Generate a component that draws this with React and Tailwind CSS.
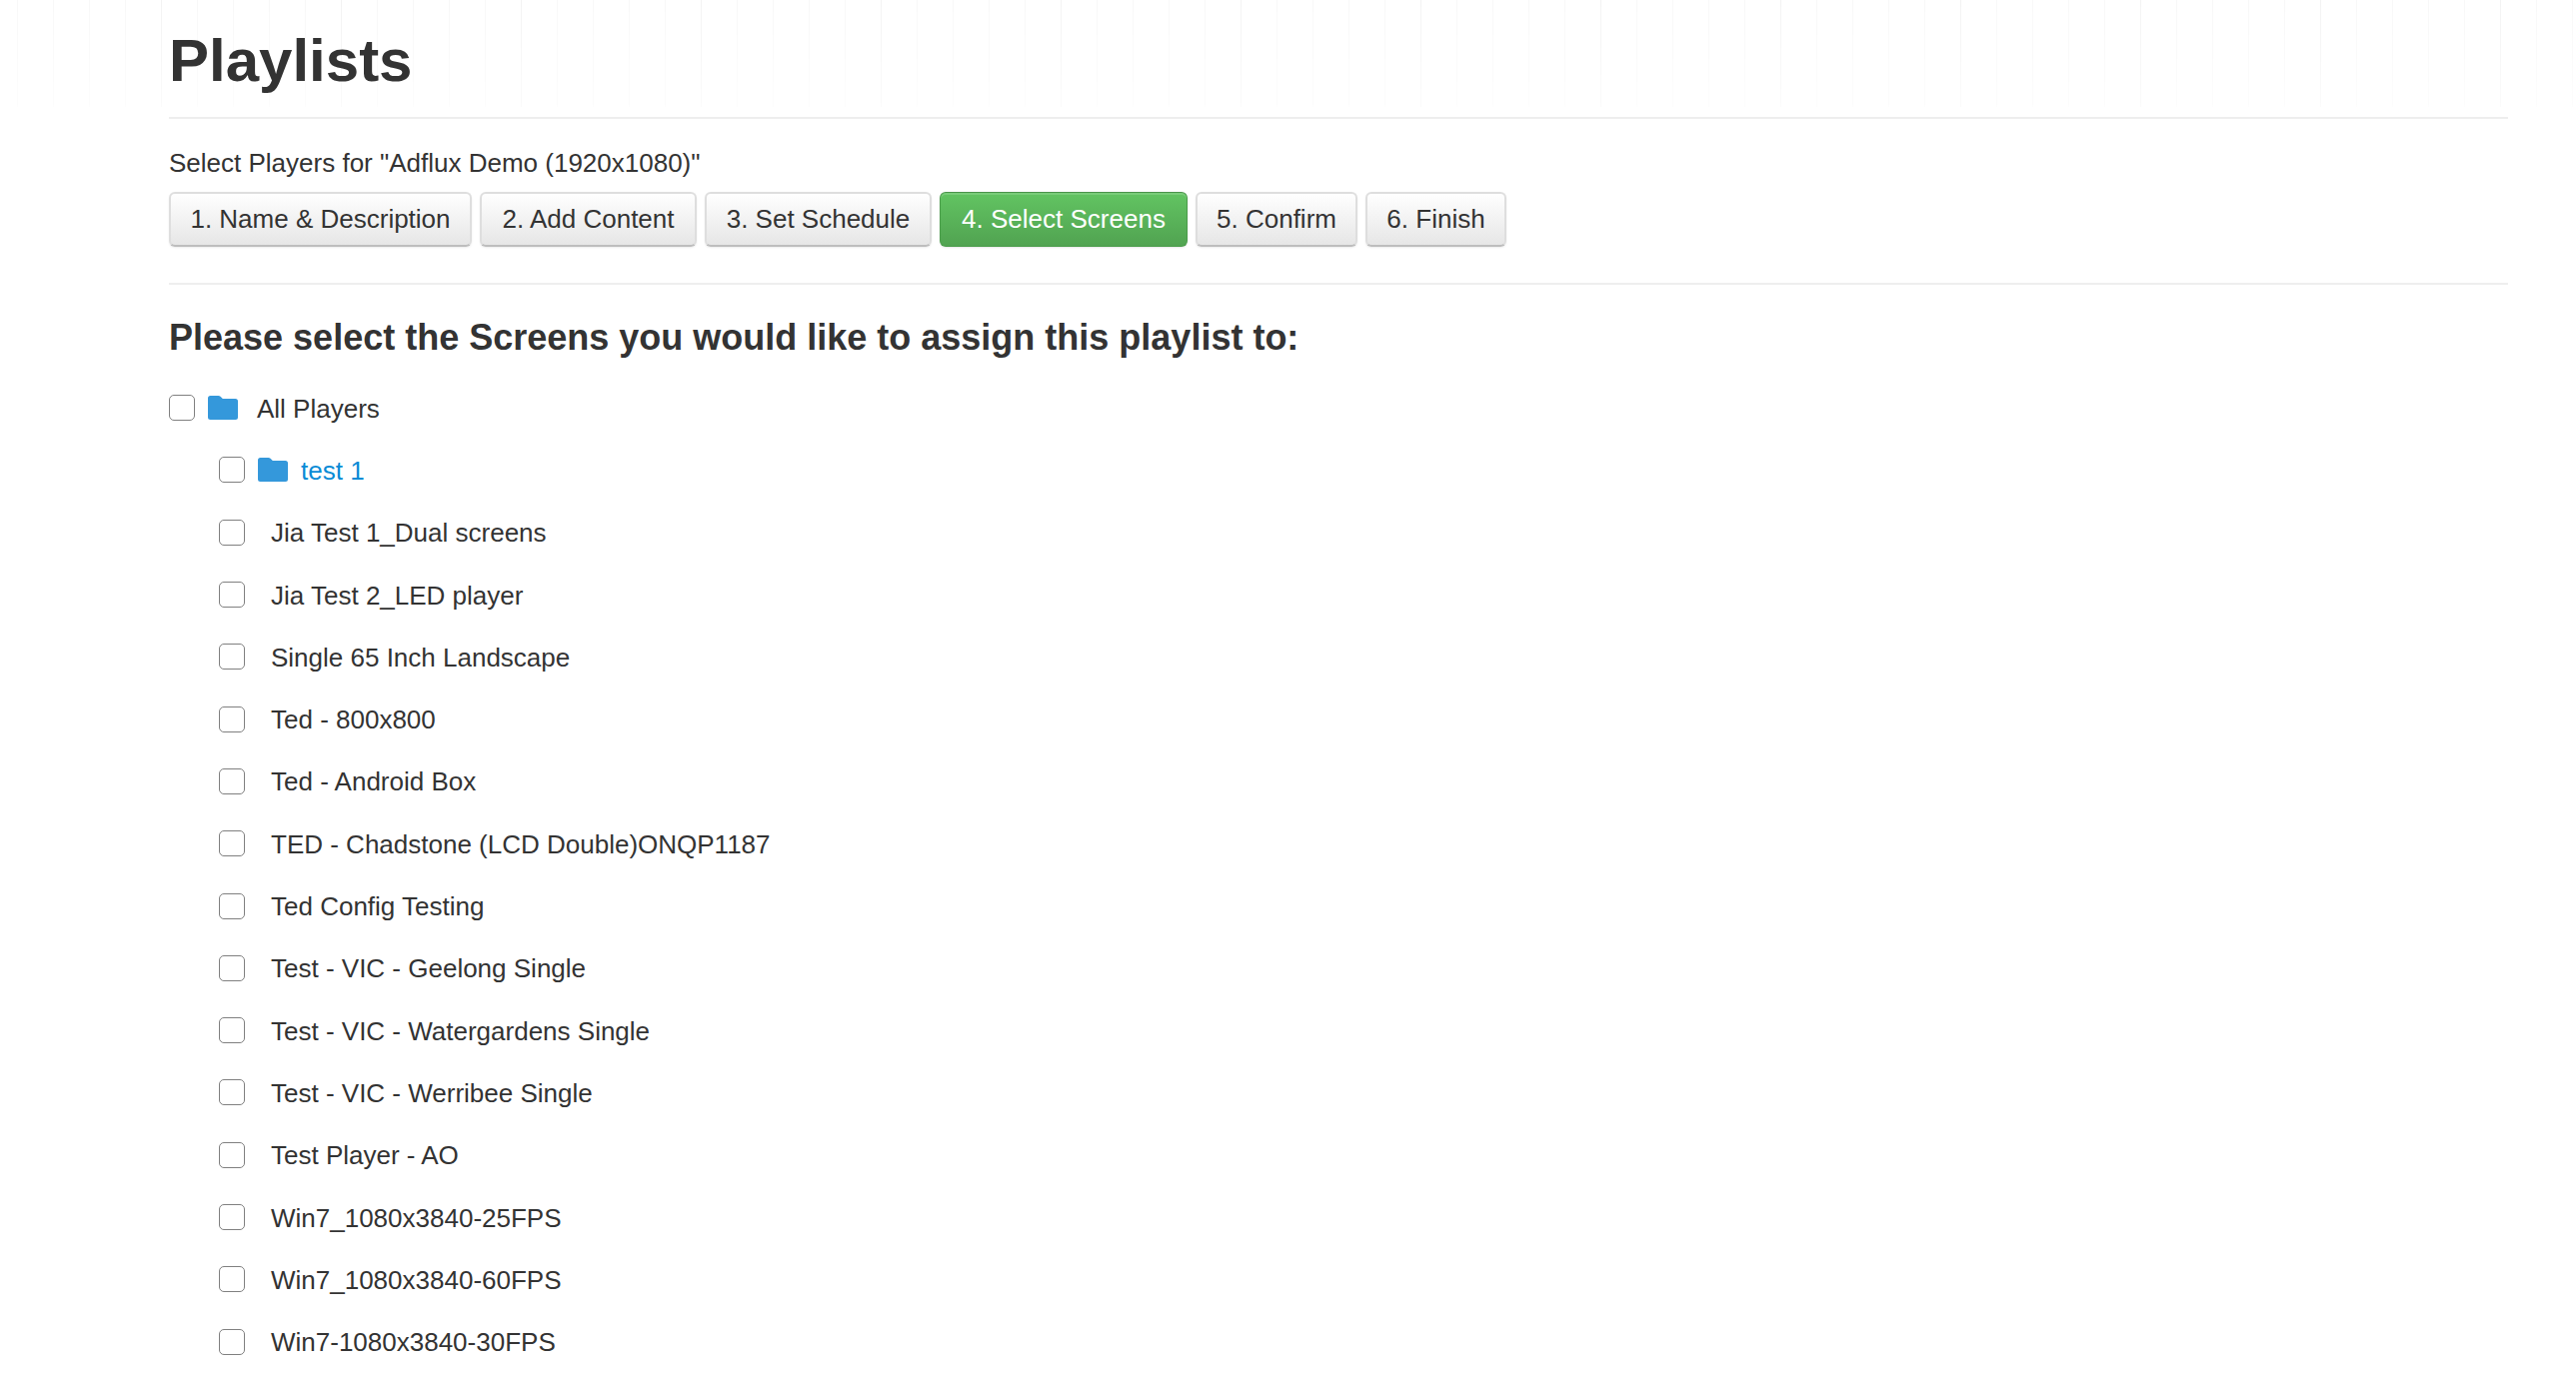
const steps = [
  { label: '1. Name & Description', width: 'w-[303px]' },
  { label: '2. Add Content', width: 'w-[217px]' },
  { label: '3. Set Schedule', width: 'w-[227px]' },
  { label: '4. Select Screens', width: 'w-[248px]', active: true },
  { label: '5. Confirm', width: 'w-[162px]' },
  { label: '6. Finish', width: 'w-[141px]' },
];

const players = [
  'Jia Test 1_Dual screens',
  'Jia Test 2_LED player',
  'Single 65 Inch Landscape',
  'Ted - 800x800',
  'Ted - Android Box',
  'TED - Chadstone (LCD Double)ONQP1187',
  'Ted Config Testing',
  'Test - VIC - Geelong Single',
  'Test - VIC - Watergardens Single',
  'Test - VIC - Werribee Single',
  'Test Player - AO',
  'Win7_1080x3840-25FPS',
  'Win7_1080x3840-60FPS',
  'Win7-1080x3840-30FPS',
];

function Checkbox() {
  return <span className="block w-[26px] h-[26px] shrink-0 rounded-[5px] border-[1.5px] border-[#808080] bg-white" />;
}

function Folder() {
  return (
    <svg viewBox="0 0 30 24" className="block w-[30px] h-[24px] shrink-0 fill-[#3498db]">
      <path d="M2.5 0H10.5Q11.6 0 12.5 0.8L14.8 3H27.5A2.5 2.5 0 0 1 30 5.5V21.5A2.5 2.5 0 0 1 27.5 24H2.5A2.5 2.5 0 0 1 0 21.5V2.5A2.5 2.5 0 0 1 2.5 0Z" />
    </svg>
  );
}

function StepButton({ step }) {
  if (step.active) {
    return (
      <button className={`${step.width} h-[55px] rounded-[6px] border border-[#4a9c4a] border-t-[#4b944b] bg-gradient-to-b from-[#62c462] to-[#51a351] text-white text-[26px] shadow-[inset_0_2px_0_rgba(255,255,255,0.15),0_1px_2px_rgba(0,0,0,0.1)]`}>
        {step.label}
      </button>
    );
  }
  return (
    <button className={`${step.width} h-[55px] rounded-[6px] border-2 border-[#dedede] border-b-[#bdbdbd] bg-gradient-to-b from-white to-[#e6e6e6] text-[#333] text-[26px] shadow-[0_1px_2px_rgba(0,0,0,0.08)]`}>
      {step.label}
    </button>
  );
}

export default function App() {
  return (
    <div className="relative min-h-[1390px] bg-white text-[#333] font-['Liberation_Sans',Arial,sans-serif] pl-[169px] pr-[68px] overflow-hidden">
      {/* faint grid behind the title */}
      <div className="absolute top-0 left-0 right-0 h-[107px] bg-[repeating-linear-gradient(90deg,transparent_0,transparent_161px,#f3f3f3_161px,#f3f3f3_162px,transparent_162px,transparent_180px),repeating-linear-gradient(90deg,transparent_0,transparent_17px,#f8f8f8_17px,#f8f8f8_18px,transparent_18px,transparent_36px)] [mask-image:linear-gradient(to_bottom,black,rgba(0,0,0,0.35))]" />

      <div className="relative">
        <h1 className="h-[117px] pt-[27px] text-[60px] leading-[68px] font-bold">Playlists</h1>
        <hr className="border-0 h-[2px] bg-[#eeeeee]" />

        <p className="mt-[29px] text-[26px] leading-[30px]">Select Players for "Adflux Demo (1920x1080)"</p>

        <div className="mt-[14px] flex gap-2">
          {steps.map((step) => (
            <StepButton key={step.label} step={step} />
          ))}
        </div>

        <hr className="mt-[36px] border-0 h-[2px] bg-[#eeeeee]" />

        <h2 className="mt-[33px] text-[36px] leading-[40px] font-bold">Please select the Screens you would like to assign this playlist to:</h2>

        <div className="mt-[19px] text-[26px]">
          <div className="h-[62.3px] flex items-center">
            <Checkbox />
            <span className="ml-[13px]"><Folder /></span>
            <span className="ml-[19px] pt-[2px]">All Players</span>
          </div>
          <div className="h-[62.3px] flex items-center pl-[50px]">
            <Checkbox />
            <span className="ml-[13px]"><Folder /></span>
            <span className="ml-[13px] pt-[2px] text-[#0a8bd6]">test 1</span>
          </div>
          {players.map((name) => (
            <div key={name} className="h-[62.3px] flex items-center pl-[50px]">
              <Checkbox />
              <span className="ml-[26px] pt-[2px]">{name}</span>
            </div>
          ))}
        </div>
      </div>
    </div>
  );
}
